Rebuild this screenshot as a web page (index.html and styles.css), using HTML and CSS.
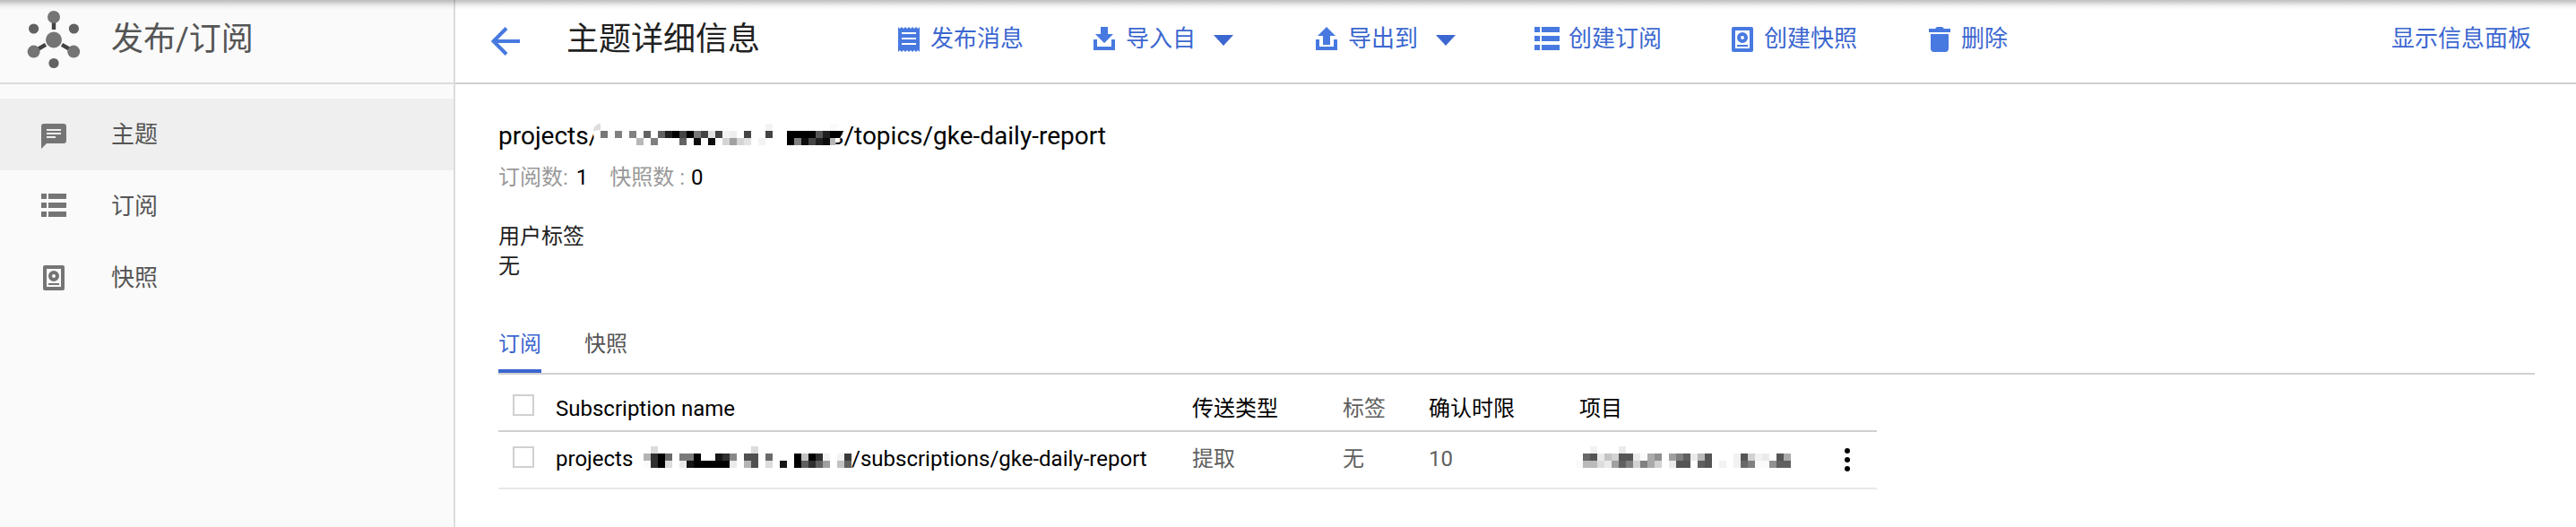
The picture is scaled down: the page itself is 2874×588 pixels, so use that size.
FILE: index.html
```html
<!DOCTYPE html>
<html lang="zh-CN">
<head>
<meta charset="utf-8">
<title>发布/订阅</title>
<link rel="stylesheet" href="styles.css">
</head>
<body>
<svg class="defs" width="0" height="0">
  <symbol id="i-list" viewBox="0 0 28 26"><path d="M0 0h6v6H0zM8 0h20v6H8zM0 10h6v6H0zM8 10h20v6H8zM0 20h6v6H0zM8 20h20v6H8z"/></symbol>
  <symbol id="i-snap" viewBox="0 0 24 28"><path fill-rule="evenodd" d="M2 0h20a2 2 0 0 1 2 2v24a2 2 0 0 1-2 2H2a2 2 0 0 1-2-2V2a2 2 0 0 1 2-2zM4 4v20h16V4z"/><path fill-rule="evenodd" d="M12 6a6 6 0 1 1 0 12a6 6 0 1 1 0-12zM12 10a2 2 0 1 0 0 4a2 2 0 1 0 0-4z"/><path d="M6 20h12v2H6z"/></symbol>
</svg>
<div class="top-shadow"></div>
<div class="app">
  <aside class="sidebar">
    <div class="brand">
      <svg class="logo" width="60" height="66" viewBox="30 11 60 66">
        <path d="M60 25v8M51 49.8L42 55M69 49.8L78 55" stroke="#424242" stroke-width="4.4"/>
        <g fill="#757575"><circle cx="60" cy="44.5" r="9"/><circle cx="60" cy="19" r="7"/><circle cx="37.6" cy="57.6" r="7"/><circle cx="82.2" cy="57.6" r="7"/></g>
        <g fill="#626262"><circle cx="37.6" cy="32" r="5.6"/><circle cx="82.4" cy="32" r="5.6"/><circle cx="60" cy="70.5" r="5.6"/></g>
      </svg>
      <span class="brand-name">发布/订阅</span>
    </div>
    <nav class="nav">
      <a class="nav-item active"><span class="nav-icon chat"><svg width="28" height="28" viewBox="0 0 28 28"><path fill-rule="evenodd" d="M3 0h22a3 3 0 0 1 3 3v16a3 3 0 0 1-3 3H6l-6 6V3a3 3 0 0 1 3-3zM6 6v2h16V6zM6 10v2h16v-2zM6 14v2h10v-2z"/></svg></span><span>主题</span></a>
      <a class="nav-item"><span class="nav-icon list"><svg width="28" height="26"><use href="#i-list"/></svg></span><span>订阅</span></a>
      <a class="nav-item"><span class="nav-icon"><svg width="24" height="28"><use href="#i-snap"/></svg></span><span>快照</span></a>
    </nav>
  </aside>
  <main class="main">
    <header class="toolbar">
      <svg class="back" width="32" height="32" viewBox="0 0 32 32"><path d="M32 16H3M17 1.5L2.5 16L17 30.5" fill="none" stroke="#4779e0" stroke-width="4"/></svg>
      <h1 class="title">主题详细信息</h1>
      <div class="action publish"><svg width="24" height="28" viewBox="0 0 24 28"><path fill-rule="evenodd" d="M0 0l2 2l2-2l2 2l2-2l2 2l2-2l2 2l2-2l2 2l2-2l2 2l2-2v28l-2-2l-2 2l-2-2l-2 2l-2-2l-2 2l-2-2l-2 2l-2-2l-2 2l-2-2l-2 2zM4 6v2h16V6zM4 12v2h16v-2zM4 18v2h16v-2z"/></svg><span>发布消息</span></div>
      <div class="action import"><svg width="24" height="26" viewBox="0 0 24 26"><path d="M8 0h8v8h6L12 18L2 8h6zM0 14h4v8h16v-8h4v12H0z"/></svg><span>导入自</span><i class="caret"></i></div>
      <div class="action export"><svg width="24" height="26" viewBox="0 0 24 26"><path d="M12 0l10 10h-6v10H8V10H2zM0 14h4v8h16v-8h4v12H0z"/></svg><span>导出到</span><i class="caret"></i></div>
      <div class="action create-sub"><svg width="28" height="26"><use href="#i-list"/></svg><span>创建订阅</span></div>
      <div class="action create-snap"><svg width="24" height="28"><use href="#i-snap"/></svg><span>创建快照</span></div>
      <div class="action delete"><svg width="24" height="28" viewBox="0 0 24 28"><path d="M0 2h7l2-2h6l2 2h7v4H0zM2 8h20v16a4 4 0 0 1-4 4H6a4 4 0 0 1-4-4z"/></svg><span>删除</span></div>
      <a class="panel-link">显示信息面板</a>
    </header>
    <section class="content">
      <div class="topic">
        <span class="topic-start">projects/</span>
        <svg class="mask mask-topic" width="280" height="24" viewBox="0 0 35 3" shape-rendering="crispEdges">
          <path fill="#fff" shape-rendering="auto" d="M0 0h34.9v1l-.4 1l-1 1H.1V2L0 1.5z"/>
          <path fill="#ddd" shape-rendering="auto" d="M0 1a1 1 0 0 1 1-1v.9H.5L.3 1z"/>
          <path fill="#f3f3f3" d="M24 0h1v1h-1zM18 1h1v1h-1zM23 2h1v1h-1z"/><path fill="#fafafa" d="M33 0h1v1h-1z"/>
          <path fill="#777" d="M1 1h1v1H1zM14 1h1v1h-1z"/><path fill="#808080" d="M3 1h1v1H3zM5 1h1v1H5zM8 2h1v1H8zM28 2h1v1h-1z"/>
          <path fill="#626262" d="M7 1h1v1H7zM9 1h1v1H9zM12 2h1v1h-1z"/><path fill="#1f1f1f" d="M10 1h1v1h-1zM32 1h1v1h-1zM31 2h1v1h-1z"/>
          <path fill="#000" d="M11 1h1v1h-1zM13 1h1v1h-1zM27 1h4v1h-4zM33 1h1v1h-1zM27 2h1v1h-1z"/>
          <path fill="#000" shape-rendering="auto" d="M34 1h.9l-.5 1H34z"/>
          <path fill="#444" d="M12 1h1v1h-1zM15 1h1v1h-1zM17 1h1v1h-1zM21 1h1v1h-1zM24 1h1v1h-1zM30 2h1v1h-1z"/>
          <path fill="#e2e2e2" d="M16 1h1v1h-1zM21 2h1v1h-1z"/><path fill="#eee" d="M19 1h1v1h-1z"/><path fill="#555" d="M31 1h1v1h-1z"/>
          <path fill="#b8b8b8" d="M6 2h1v1H6zM33 2h.8v1H33z"/><path fill="#0c0c0c" d="M14 2h1v1h-1zM16 2h1v1h-1zM29 2h1v1h-1zM32 2h1v1h-1z"/>
          <path fill="#d4d4d4" d="M18 2h1v1h-1zM20 2h1v1h-1z"/><path fill="#a0a0a0" d="M19 2h1v1h-1z"/>
        </svg>
        <span class="topic-end">s/topics/gke-daily-report</span>
      </div>
      <div class="counts"><span>订阅数:</span><b class="n1">1</b><span class="snap-count">快照数 :</span><b class="n2">0</b></div>
      <div class="labels"><div>用户标签</div><div>无</div></div>
      <div class="tabs"><a class="tab selected">订阅</a><a class="tab">快照</a></div>
      <div class="table">
        <div class="row head">
          <i class="check"></i><span>Subscription name</span><span>传送类型</span><span class="muted">标签</span><span>确认时限</span><span>项目</span><span></span>
        </div>
        <div class="row body">
          <i class="check"></i>
          <span class="name"><span class="name-start">projects</span><svg class="mask" width="232" height="24" viewBox="0 0 29 3" shape-rendering="crispEdges">
            <path fill="#dcdcdc" d="M1 0h1v1H1zM15 0h1v1h-1zM3 2h1v1H3zM17 2h1v1h-1z"/><path fill="#b4b4b4" d="M0 1h1v1H0zM14 2h1v1h-1z"/>
            <path fill="#303030" d="M1 1h1v2H1zM11 1h1v1h-1zM24 1h1v1h-1zM23 2h1v1h-1z"/>
            <path fill="#000" d="M2 1h1v2H2zM7 1h1v1H7zM7 2h5v1H7zM21 1h1v2h-1zM23 1h1v1h-1z"/>
            <path fill="#6a6a6a" d="M3 1h1v1H3zM17 1h1v1h-1z"/><path fill="#7a7a7a" d="M5 1h2v1H5z"/><path fill="#161616" d="M10 1h1v1h-1zM6 2h1v1H6zM19 2h1v1h-1z"/>
            <path fill="#888" d="M12 1h1v1h-1z"/><path fill="#505050" d="M14 1h2v1h-2zM15 2h1v1h-1z"/><path fill="#c2c2c2" d="M22 1h1v1h-1zM27 2h1v1h-1z"/>
            <path fill="#f3f3f3" d="M25 1h1v1h-1zM27 1h1v1h-1z"/><path fill="#fafafa" d="M0 2h1v1H0z"/><path fill="#3a3a3a" d="M28 1h1v1h-1z"/>
            <path fill="#eaeaea" d="M5 2h1v1H5zM12 2h1v1h-1z"/><path fill="#606060" d="M22 2h1v1h-1zM24 2h1v1h-1zM28 2h1v1h-1z"/><path fill="#a0a0a0" d="M25 2h1v1h-1z"/>
          </svg><span>/subscriptions/gke-daily-report</span></span>
          <span class="muted">提取</span><span class="muted">无</span><span class="muted">10</span>
          <span class="project"><svg class="mask" width="240" height="24" viewBox="0 0 30 3" shape-rendering="crispEdges">
            <path fill="#f2f2f2" d="M2 0h1v1H2zM22 1h1v2h-1zM25 1h1v1h-1zM20 2h1v1h-1z"/><path fill="#eaeaea" d="M6 0h1v1H6zM3 1h1v1H3zM8 1h1v1H8zM16 1h1v1h-1zM26 1h1v1h-1zM4 2h1v1H4zM13 2h1v1h-1z"/>
            <path fill="#686868" d="M1 1h1v1H1zM23 2h1v1h-1z"/><path fill="#555" d="M2 1h1v1H2zM6 1h2v1H6zM18 1h1v2h-1zM23 1h1v1h-1zM28 1h1v1h-1zM14 2h2v1h-2z"/>
            <path fill="#c4c4c4" d="M4 1h1v1H4z"/><path fill="#d2d2d2" d="M5 1h1v1H5zM24 1h1v1h-1zM8 2h1v1H8zM11 2h1v1h-1z"/><path fill="#fafafa" d="M9 1h1v1H9zM0 2h1v1H0zM25 2h2v1h-2z"/>
            <path fill="#aaa" d="M10 1h1v2h-1zM29 1h1v1h-1z"/><path fill="#909090" d="M11 1h1v1h-1zM27 2h1v1h-1z"/><path fill="#a0a0a0" d="M13 1h1v1h-1zM5 2h1v1H5z"/>
            <path fill="#808080" d="M14 1h1v1h-1zM7 2h1v1H7zM9 2h1v1H9zM24 2h1v1h-1z"/><path fill="#606060" d="M15 1h1v1h-1zM6 2h1v1H6zM17 2h1v1h-1zM28 2h2v1h-2z"/>
            <path fill="#bababa" d="M17 1h1v1h-1zM1 2h2v1H1z"/><path fill="#ddd" d="M3 2h1v1H3z"/>
          </svg></span>
          <svg class="more" width="6" height="26" viewBox="0 0 6 26"><circle cx="3" cy="3" r="3"/><circle cx="3" cy="13" r="3"/><circle cx="3" cy="23" r="3"/></svg>
        </div>
      </div>
    </section>
  </main>
</div>
</body>
</html>
```

FILE: styles.css
```css
* { box-sizing: border-box; }
body {
  margin: 0;
  background: #fff;
  color: #000;
  font-family: Roboto, "Noto Sans CJK SC", sans-serif;
  font-size: 24px;
  overflow: hidden;
}
svg { display: block; flex: none; }
.defs { position: absolute; }
.top-shadow {
  position: absolute;
  inset: 0 0 auto 0;
  height: 11px;
  z-index: 2;
  background: linear-gradient(rgba(0,0,0,.25), rgba(0,0,0,.17) 25%, rgba(0,0,0,.05) 60%, transparent);
}
.app { display: flex; height: 588px; }

.sidebar {
  width: 508px;
  flex: none;
  background: #fafafa;
  border-right: 2px solid #dcdcdc;
  color: #555;
}
.brand {
  display: flex;
  height: 94px;
  padding: 11px 0 0 30px;
  border-bottom: 2px solid #dcdcdc;
}
.brand-name { margin-left: 34px; font-size: 36px; line-height: 66px; }
.nav { padding-top: 16px; }
.nav-item {
  display: flex;
  height: 80px;
  align-items: center;
  font-size: 26px;
  line-height: 30px;
  padding-bottom: 1px;
}
.nav-item.active { background: #efefef; }
.nav-icon {
  display: flex;
  width: 120px;
  margin-right: 4px;
  justify-content: center;
  padding-top: 1px;
  fill: #757575;
}
.nav-icon.chat { padding-top: 5px; }
.nav-icon.list { padding: 0 0 1px; }

.main { flex: 1; min-width: 0; }
.toolbar {
  display: flex;
  height: 94px;
  padding: 30px 50px 0 40px;
  border-bottom: 2px solid #d0d0d0;
}
.title {
  width: 370px;
  margin: -6px 0 0 52px;
  font-size: 36px;
  font-weight: 400;
  line-height: 40px;
  color: #212121;
  white-space: nowrap;
}
.action {
  display: flex;
  gap: 12px;
  align-items: flex-start;
  color: #3c67d0;
  fill: #4779e0;
  font-size: 26px;
  line-height: 26px;
  white-space: nowrap;
}
.import { margin-left: 78px; }
.export { margin-left: 92px; }
.create-sub { margin-left: 88px; gap: 10px; }
.create-snap { margin-left: 78px; }
.delete { margin-left: 80px; }
.caret {
  margin: 9px 0 0 8px;
  border: 11px solid transparent;
  border-top: 12px solid #3c67d0;
  border-bottom: 0;
}
.panel-link { margin-left: auto; color: #3c67d0; font-size: 26px; line-height: 26px; }

.content { padding: 36px 46px 0 48px; }
.topic { display: flex; height: 44px; font-size: 28px; line-height: 44px; white-space: nowrap; }
.topic-start { width: 106px; }
.mask-topic { margin-top: 8px; z-index: 1; }
.topic-end { margin-left: -15px; }
.counts { display: flex; height: 48px; line-height: 48px; color: #999; }
.counts b { font-weight: 400; color: #000; }
.n1 { margin-left: 9px; }
.snap-count { margin-left: 24px; }
.n2 { margin-left: 7px; }
.labels { margin-top: 26px; line-height: 33px; color: #212121; }

.tabs {
  display: flex;
  gap: 48px;
  height: 71px;
  margin-top: 33px;
  border-bottom: 2px solid #d0d0d0;
}
.tab { height: 69px; line-height: 74px; color: #555; }
.tab.selected { color: #3c67d0; border-bottom: 4px solid #3c67d0; }

.table { width: 1538px; }
.row {
  display: grid;
  grid-template-columns: 64px 710px 168px 96px 168px 292px 40px;
  line-height: 28px;
  white-space: nowrap;
}
.head { height: 64px; padding-top: 24px; border-bottom: 2px solid #d0d0d0; }
.head .check { margin-top: -2px; }
.body { height: 64px; padding-top: 16px; border-bottom: 2px solid #e8e8e8; }
.check { width: 24px; height: 24px; margin-left: 16px; border: 2px solid #d0d0d0; }
.muted { color: #606060; }
.name { display: flex; }
.name-start { width: 98px; }
.project .mask { margin-left: -4px; }
.more { margin: 2px 0 0 4px; }
```
